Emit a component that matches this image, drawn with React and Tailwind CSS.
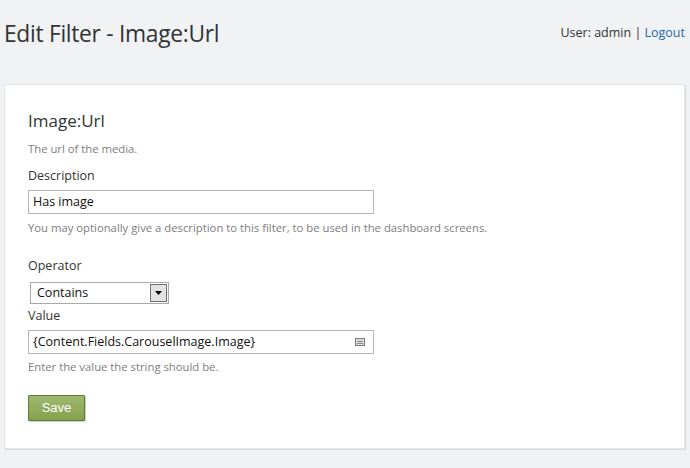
const App = () => {
  return (
    <div className="min-h-[468px] w-[690px] bg-[#f1f2f4] text-[#333] font-['Open_Sans',sans-serif]">
      <header className="flex items-start justify-between pl-[4px] pr-[5px] pt-[19px]">
        <h1 className="text-[22.8px] leading-[30px] text-[#333] tracking-[-0.3px]">Edit Filter - Image:Url</h1>
        <div className="pt-[5px] text-[12.5px] text-[#333]">
          User: admin | <a className="text-[#1e6aa5]">Logout</a>
        </div>
      </header>

      <div className="mx-[4px] mt-[35px] w-[681px] h-[365px] bg-white border border-[#e4e5e7] shadow-[1px_1px_1px_#dcdde0] px-[23px] pt-[24px]">
        <h2 className="text-[17px] leading-[24px] text-[#333]">Image:Url</h2>
        <p className="mt-[9px] text-[11.3px] leading-[14px] text-[#7d7d7d]">The url of the media.</p>

        <label className="block mt-[11px] text-[12.5px] leading-[18px]">Description</label>
        <div className="mt-[5px] w-[346px] h-[24px] border border-[#b5b5b5] px-[4px] flex items-center text-[12.5px] text-[#111]">
          Has image
        </div>
        <p className="mt-[7px] text-[11.3px] leading-[14px] text-[#7d7d7d]">
          You may optionally give a description to this filter, to be used in the dashboard screens.
        </p>

        <label className="block mt-[22px] text-[12.5px] leading-[18px]">Operator</label>
        <div className="mt-[7px] ml-[2px] w-[139px] h-[22px] border border-[#a9a9a9] flex items-center justify-between pl-[6px] pr-[1px] text-[12.5px] text-[#111]">
          <span>Contains</span>
          <span className="w-[17px] h-[18px] border border-[#707070] bg-[#e3e3e3] flex items-center justify-center">
            <svg width="7" height="4" viewBox="0 0 7 4"><path d="M0 0h7L3.5 4z" fill="#000" /></svg>
          </span>
        </div>

        <label className="block mt-[3px] text-[12.5px] leading-[18px]">Value</label>
        <div className="mt-[5px] w-[346px] h-[24px] border border-[#b5b5b5] pl-[4px] pr-[8px] flex items-center justify-between text-[12.5px] text-[#111]">
          <span>{'{Content.Fields.CarouselImage.Image}'}</span>
          <span className="w-[10px] h-[8px] border border-[#777] bg-[#ddd] flex flex-col justify-center gap-[1px] px-[1px]">
            <span className="h-px bg-[#888]" />
            <span className="h-px bg-[#888]" />
          </span>
        </div>
        <p className="mt-[6px] text-[11.3px] leading-[14px] text-[#7d7d7d]">Enter the value the string should be.</p>

        <button className="mt-[21px] w-[57px] h-[26px] border border-[#5c7d33] rounded-[1px] bg-gradient-to-b from-[#a0b971] to-[#84a14a] text-white text-[13px] font-['Liberation_Sans',sans-serif] shadow-[1px_1px_1px_rgba(0,0,0,0.2)]">
          Save
        </button>
      </div>
    </div>
  );
};

export default App;
